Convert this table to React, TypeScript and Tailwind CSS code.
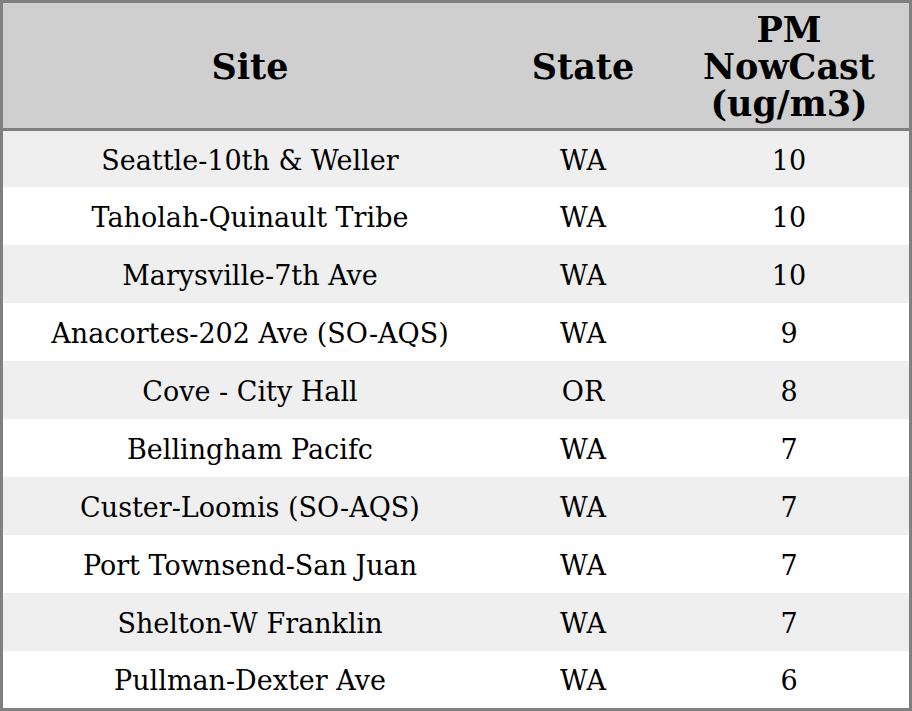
import React from "react";

const rows: [string, string, string][] = [
  ["Seattle-10th & Weller", "WA", "10"],
  ["Taholah-Quinault Tribe", "WA", "10"],
  ["Marysville-7th Ave", "WA", "10"],
  ["Anacortes-202 Ave (SO-AQS)", "WA", "9"],
  ["Cove - City Hall", "OR", "8"],
  ["Bellingham Pacifc", "WA", "7"],
  ["Custer-Loomis (SO-AQS)", "WA", "7"],
  ["Port Townsend-San Juan", "WA", "7"],
  ["Shelton-W Franklin", "WA", "7"],
  ["Pullman-Dexter Ave", "WA", "6"],
];

export default function App() {
  return (
    <div
      className="w-[912px] h-[711px] overflow-hidden bg-white text-black"
      style={{ fontFamily: '"DejaVu Serif", serif' }}
    >
      <div className="w-[912px] h-[711px] border-[3px] border-[#808080] flex flex-col">
        <div className="grid grid-cols-[494px_172px_240px] h-[128px] shrink-0 bg-[#cfcfcf] border-b-[3px] border-[#808080] font-bold text-[35px] leading-[37px] pt-[2px]">
          <div className="flex items-center justify-center text-center">Site</div>
          <div className="flex items-center justify-center text-center">State</div>
          <div className="flex items-center justify-center text-center">
            PM
            <br />
            NowCast
            <br />
            (ug/m3)
          </div>
        </div>
        {rows.map((r, i) => (
          <div
            key={i}
            className={`grid grid-cols-[494px_172px_240px] shrink-0 text-[27px] pt-[4px] ${
              i === 0 ? "h-[56px]" : i === rows.length - 1 ? "h-[57px]" : "h-[58px]"
            } ${i % 2 === 0 ? "bg-[#efefef]" : "bg-white"}`}
          >
            <div className="flex items-center justify-center">{r[0]}</div>
            <div className="flex items-center justify-center">{r[1]}</div>
            <div className="flex items-center justify-center">{r[2]}</div>
          </div>
        ))}
      </div>
    </div>
  );
}
